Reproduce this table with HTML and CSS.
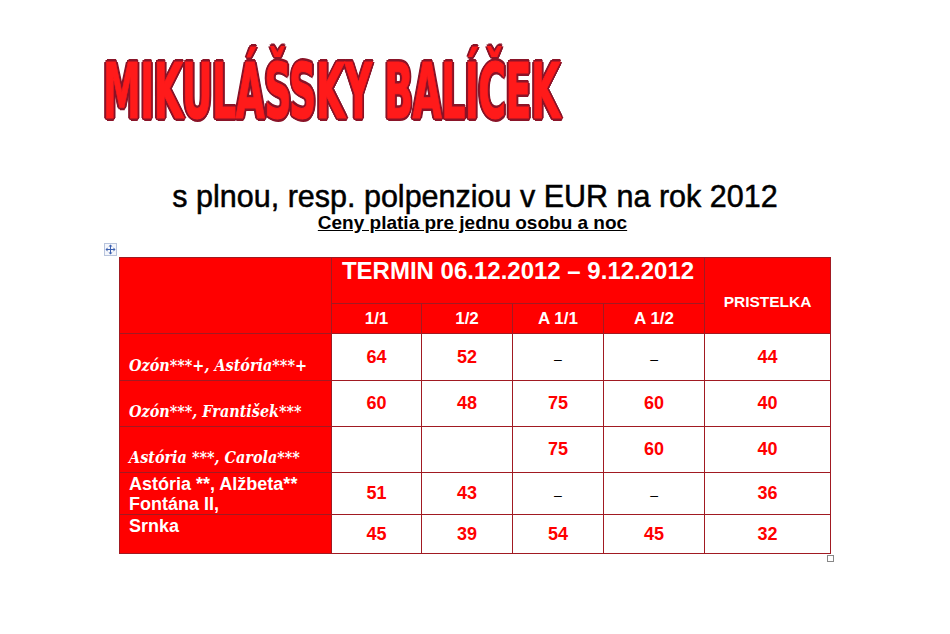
FILE: index.html
```html
<!DOCTYPE html>
<html lang="sk">
<head>
<meta charset="utf-8">
<title>Mikulášsky balíček</title>
<link rel="stylesheet" href="styles.css">
</head>
<body>
<div class="page">
  <div class="logo"><span class="logo-text">MIKULÁŠSKY BALÍČEK</span></div>
  <h2 class="subtitle">s plnou, resp. polpenziou v EUR na rok 2012</h2>
  <p class="note">Ceny platia pre jednu osobu a noc</p>
  <div class="table-wrap">
    <span class="move-handle">
      <svg width="11" height="11" viewBox="0 0 11 11">
        <path d="M5.5 1v9M1 5.5h9" stroke="#3a5fb0" stroke-width="1" fill="none"/>
        <path d="M5.5 0.5l-2 2h4zM5.5 10.5l-2-2h4zM0.5 5.5l2-2v4zM10.5 5.5l-2-2v4z" fill="#3a5fb0"/>
      </svg>
    </span>
    <table class="prices">
      <colgroup>
        <col class="c-name"><col class="c-n1"><col class="c-n2"><col class="c-n3"><col class="c-n4"><col class="c-extra">
      </colgroup>
      <tr class="r-head1">
        <th rowspan="2" class="blank"></th>
        <th colspan="4" class="termin">TERMIN 06.12.2012 – 9.12.2012</th>
        <th rowspan="2" class="pristelka">PRISTELKA</th>
      </tr>
      <tr class="r-head2">
        <th class="sub">1/1</th><th class="sub">1/2</th><th class="sub">A 1/1</th><th class="sub">A 1/2</th>
      </tr>
      <tr class="r-a">
        <td class="name serif">Ozón***+, Astória***+</td>
        <td class="num">64</td><td class="num">52</td><td class="dash">–</td><td class="dash">–</td><td class="num">44</td>
      </tr>
      <tr class="r-b">
        <td class="name serif">Ozón***, František***</td>
        <td class="num">60</td><td class="num">48</td><td class="num">75</td><td class="num">60</td><td class="num">40</td>
      </tr>
      <tr class="r-c">
        <td class="name serif">Astória ***, Carola***</td>
        <td class="num"></td><td class="num"></td><td class="num">75</td><td class="num">60</td><td class="num">40</td>
      </tr>
      <tr class="r-d">
        <td class="name sans">Astória **, Alžbeta**<br>Fontána II,</td>
        <td class="num">51</td><td class="num">43</td><td class="dash">–</td><td class="dash">–</td><td class="num">36</td>
      </tr>
      <tr class="r-e">
        <td class="name sans">Srnka</td>
        <td class="num">45</td><td class="num">39</td><td class="num">54</td><td class="num">45</td><td class="num">32</td>
      </tr>
    </table>
    <span class="resize-handle"></span>
  </div>
</div>
</body>
</html>
```
FILE: styles.css
```css
html, body {
  margin: 0;
  padding: 0;
  background: #ffffff;
}
.page {
  width: 950px;
  height: 634px;
  overflow: hidden;
  font-family: "Liberation Sans", Arial, sans-serif;
}
.logo {
  height: 179px;
  padding-left: 103px;
  box-sizing: border-box;
  padding-top: 47px;
}
.logo-text {
  display: inline-block;
  font-family: "DejaVu Sans Condensed", "DejaVu Sans", sans-serif;
  font-weight: bold;
  font-size: 76px;
  line-height: 90px;
  color: #ff1a1a;
  letter-spacing: -1px;
  transform: scaleX(0.554);
  transform-origin: left center;
  white-space: nowrap;
  -webkit-text-stroke: 1px #ff1a1a;
  text-shadow:
    2px 0 0 #8a1428, -2px 0 0 #8a1428, 0 2px 0 #8a1428, 0 -2px 0 #8a1428,
    2px 2px 0 #8a1428, -2px -2px 0 #8a1428, 2px -2px 0 #8a1428, -2px 2px 0 #8a1428,
    3px 1px 0 #8a1428, -3px 1px 0 #8a1428, 1px 3px 0 #8a1428, 1px -3px 0 #8a1428,
    4px 0 0 #8a1428, -4px 0 0 #8a1428;
}
.subtitle {
  margin: 0;
  text-align: center;
  font-weight: normal;
  font-size: 30.5px;
  line-height: 34px;
  color: #000;
  -webkit-text-stroke: 0.5px #000;
}
.note {
  margin: 0;
  text-align: center;
  font-family: "Liberation Sans", Arial, sans-serif;
  font-weight: bold;
  font-size: 19px;
  line-height: 20px;
  text-decoration: underline;
  padding-right: 5px;
  color: #000;
}
.table-wrap {
  position: relative;
  margin-top: 24px;
  margin-left: 119px;
  width: 711px;
}
.move-handle {
  position: absolute;
  left: -15px;
  top: -14px;
  width: 11px;
  height: 11px;
  border: 1px solid #b8c4dc;
  background: #f4f6fb;
  display: flex;
  align-items: center;
  justify-content: center;
}
.resize-handle {
  position: absolute;
  right: -4px;
  bottom: -8px;
  width: 5px;
  height: 5px;
  border: 1px solid #888;
  background: #fff;
}
.prices {
  border-collapse: collapse;
  table-layout: fixed;
  width: 711px;
}
.c-name { width: 212px; }
.c-n1 { width: 90px; }
.c-n2 { width: 91px; }
.c-n3 { width: 91px; }
.c-n4 { width: 101px; }
.c-extra { width: 126px; }
.prices th, .prices td {
  border: 1.5px solid #a11a22;
  padding: 0;
  text-align: center;
}
.prices th {
  background: #ff0000;
  color: #fff;
  font-weight: bold;
}
.r-head1 { height: 46px; }
.r-head2 { height: 30px; }
.r-a { height: 47px; }
.r-b { height: 46px; }
.r-c { height: 46px; }
.r-d { height: 41px; }
.r-e { height: 39px; }
.prices th.termin {
  font-size: 24px;
  vertical-align: top;
  padding-top: 1px;
  line-height: 24px;
}
.prices th.pristelka {
  font-size: 15.5px;
  vertical-align: middle;
  padding-top: 12px;
}
.prices th.sub {
  font-size: 17px;
}
.prices td.name {
  background: #ff0000;
  color: #fff;
  text-align: left;
  padding-left: 9px;
}
.prices td.serif {
  font-family: "DejaVu Serif Condensed", "DejaVu Serif", serif;
  font-style: italic;
  font-weight: bold;
  font-size: 16px;
  vertical-align: bottom;
  padding-bottom: 5px;
}
.prices td.sans {
  font-family: "Liberation Sans", Arial, sans-serif;
  font-weight: bold;
  font-size: 18px;
  line-height: 20px;
  vertical-align: top;
  padding-top: 1px;
}
.num {
  color: #ff0000;
  font-weight: bold;
  font-size: 18px;
  background: #fff;
}
.prices td.dash {
  color: #000;
  font-size: 14px;
  background: #fff;
  padding-top: 3px;
}
```
